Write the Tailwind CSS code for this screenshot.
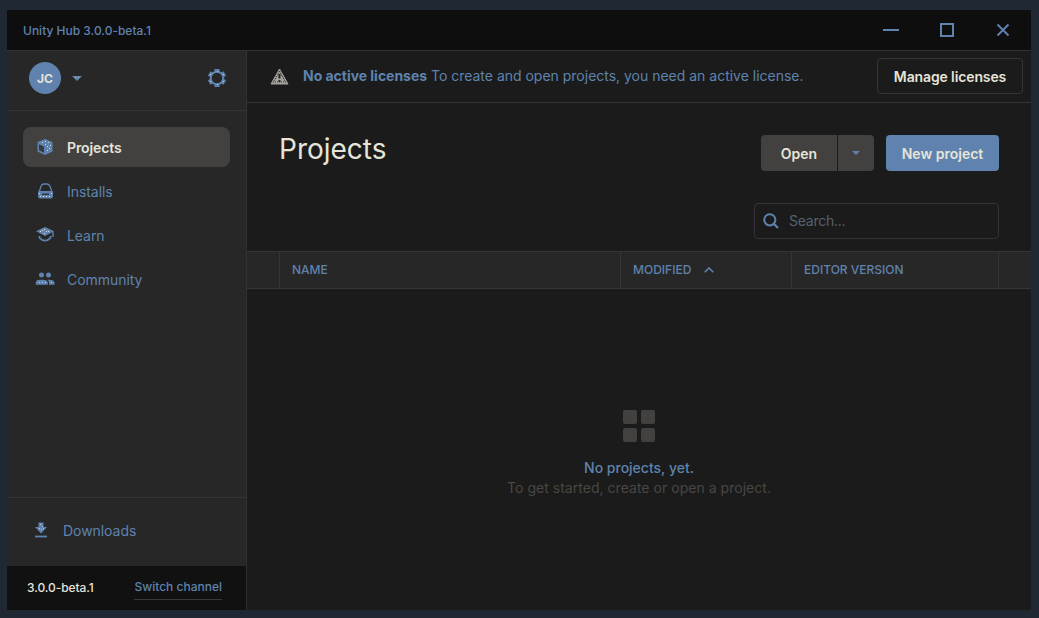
<!DOCTYPE html>
<html lang="en">
<head>
<meta charset="utf-8">
<title>Unity Hub</title>
<script src="https://cdn.jsdelivr.net/npm/@tailwindcss/browser@4"></script>
</head>
<body class="w-[1039px] h-[618px] overflow-hidden bg-[#202833] pt-[10px] pl-[7px] font-['Inter',sans-serif] text-[#5f83ae] text-sm">
<div class="w-[1024px] h-[600px] flex flex-col bg-[#1b1b1b]">
  <header class="h-10 shrink-0 bg-[#0e0e0e] flex items-center justify-between pl-4 pr-[21px]">
    <span class="text-[12px] font-medium pt-px">Unity Hub 3.0.0-beta.1</span>
    <div class="flex items-center">
      <svg class="w-4 h-4" viewBox="0 0 16 16"><path d="M0 8h16" stroke="currentColor" stroke-width="2"/></svg>
      <svg class="w-[14px] h-[14px] ml-[41px]" viewBox="0 0 14 14"><path d="M1 1h12v12H1z" fill="none" stroke="currentColor" stroke-width="2"/></svg>
      <svg class="w-[14px] h-[14px] ml-[42px]" viewBox="0 0 14 14"><path d="M1.500 1.500l11 11M12.500 1.500l-11 11" stroke="currentColor" stroke-width="1.900"/></svg>
    </div>
  </header>
  <div class="flex flex-1 min-h-0 border-t border-[#303134]">
    <aside class="w-60 shrink-0 bg-[#272727] border-r border-[#303136] flex flex-col">
      <div class="h-[60px] border-b border-[#343537] flex items-center pl-[22px] pr-5 pb-[5px]">
        <div class="w-8 h-8 rounded-full bg-[#5f83ae] text-[#e6e4d9] text-[12px] font-bold flex items-center justify-center pt-px">JC</div>
        <svg class="w-[10px] h-[5px] ml-[11px]" viewBox="0 0 10 5"><path d="M0 0h10L5 5z" fill="currentColor"/><path d="M3 1h1v1H3zM6 1h1v1H6z" fill="#a9b8c6"/></svg>
        <svg class="w-[18px] h-[18px] ml-auto" viewBox="0 0 18 18"><g fill="currentColor"><path d="M6.500 0h5v3.500h-5zM6.500 14.500h5V18h-5z"/><path d="M6.500 0h5v3.500h-5zM6.500 14.500h5V18h-5z" transform="rotate(60 9 9)"/><path d="M6.500 0h5v3.500h-5zM6.500 14.500h5V18h-5z" transform="rotate(120 9 9)"/></g><circle cx="9" cy="9" r="6.300" fill="none" stroke="currentColor" stroke-width="2"/><path d="M9 2h1v1H9zM9 15h1v1H9zM2 5h1v1H2zM15 5h1v1h-1zM2 12h1v1H2zM15 12h1v1h-1z" fill="#c3cad0"/></svg>
      </div>
      <nav class="px-4 pt-4 flex flex-col gap-1 tracking-[-0.05px]">
        <div class="h-10 rounded-lg bg-[#42413f] text-[#e6e4d9] font-semibold tracking-[-0.1px] flex items-center pl-3">
          <svg class="w-5 h-5 text-[#5f83ae]" viewBox="0 0 20 20"><path d="M10 2l7.500 3v9.500L10 18l-7.500-3.500V5z" fill="currentColor"/><path d="M4 7.200l5 2.300v6.200l-5-2.400z" fill="#383a3d"/><path d="M7 5h1v1H7zM10 4h1v1h-1zM10 7h1v1h-1zM13 5h1v1h-1zM12 9h1v1h-1zM15 8h1v1h-1zM12 13h1v1h-1zM14 11h1v1h-1z" fill="#dedccf"/></svg>
          <span class="ml-3 pt-px">Projects</span>
        </div>
        <div class="h-10 flex items-center pl-3">
          <svg class="w-5 h-5" viewBox="0 0 20 20"><path d="M4.300 10.500L6 5.300Q6.800 3 9 3h3Q14.200 3 15 5.300l1.700 5.200" fill="none" stroke="currentColor" stroke-width="1.300"/><path d="M3 11q0-1 1-1h13q1 0 1 1v4.500q0 2-2 2H5q-2 0-2-2z" fill="currentColor"/><path d="M7 12.500h7V14H7z" fill="#30343a"/><path d="M4 12h1v1H4zM16 12h1v1h-1zM5 15h1v1H5zM8 15h1v1H8zM11 15h1v1h-1zM14 15h1v1h-1z" fill="#dedccf"/></svg>
          <span class="ml-3 pt-px">Installs</span>
        </div>
        <div class="h-10 flex items-center pl-3">
          <svg class="w-5 h-5" viewBox="0 0 20 20"><path d="M1 6.300L10 2l9 4.300-9 4.700z" fill="currentColor"/><path d="M18 6.500V12" fill="none" stroke="currentColor" stroke-width="1.400"/><path d="M4.500 11v1.800Q10 18.500 15.500 12.800V11" fill="none" stroke="currentColor" stroke-width="1.700"/><path d="M7 5h1v1H7zM9 4h1v1H9zM11 6h1v1h-1zM9 8h1v1H9zM13 6h1v1h-1zM5 6h1v1H5z" fill="#dedccf"/></svg>
          <span class="ml-3 pt-px">Learn</span>
        </div>
        <div class="h-10 flex items-center pl-3">
          <svg class="w-5 h-5" viewBox="0 0 20 20"><g fill="currentColor"><circle cx="6.500" cy="6" r="2.500"/><circle cx="13.500" cy="6" r="2.500"/><path d="M.8 15.800v-2q0-3 4-3h3q5 0 5 3v2zM14 15.800v-2q0-2-1.500-3h1.200q5.800 0 5.800 3v2z"/></g><path d="M4 13h1v1H4zM7 13h1v1H7zM10 13h1v1h-1zM16 13h1v1h-1z" fill="#c3cad0"/></svg>
          <span class="ml-3 pt-px">Community</span>
        </div>
      </nav>
      <div class="mt-auto h-[69px] border-t border-[#343537] flex items-center pl-[27px]">
        <svg class="w-[14px] h-4 -mt-[4px]" viewBox="0 0 14 16"><path d="M4.500 .5h5V5H13L7 11.500 1 5h3.500z" fill="currentColor"/><path d="M1 14.500h12" stroke="currentColor" stroke-width="1.800"/><path d="M6 2h1v1H6zM8 4h1v1H8zM5 6h1v1H5zM7 7h1v1H7zM9 6h1v1H9z" fill="#c3cad0"/></svg>
        <span class="ml-[15px] -mt-0.5 tracking-[-0.05px]">Downloads</span>
      </div>
      <div class="h-11 bg-[#111] flex items-center justify-between pl-5 pr-6 text-[12px] font-medium">
        <span class="text-[#e6e4d9] tracking-[-0.08px]">3.0.0-beta.1</span>
        <span class="border-b border-[#39383c] leading-[26px] h-[25px] flex items-center -mt-px">Switch channel</span>
      </div>
    </aside>
    <main class="flex-1 min-w-0 flex flex-col">
      <div class="h-[52px] border-b border-[#343539] flex items-center pl-[23px] pr-2 pb-px">
        <svg class="w-[19px] h-[17px] text-[#a5a39b]" viewBox="0 0 19 17"><path d="M9.500 1L18 16H1z" fill="currentColor" stroke="currentColor" stroke-linejoin="round"/><path d="M9.500 6v4.500M9.500 12v2" stroke="#242424" stroke-width="2"/><path d="M9.500 3L3.500 14h12z" fill="none" stroke="#3a3937" stroke-width="1.200" stroke-dasharray="1 1"/></svg>
        <p class="ml-[14px] -mt-px whitespace-nowrap"><b class="font-bold tracking-[-0.03px]">No active licenses</b> <span class="tracking-[-0.01px]">To create and open projects, you need an active license.</span></p>
        <button class="ml-auto w-[146px] h-9 rounded border border-[#353538] text-[#e6e4d9] font-semibold tracking-[-0.12px] whitespace-nowrap pt-0.5">Manage licenses</button>
      </div>
      <div class="flex items-start justify-between pl-8 pr-8 pt-8">
        <h1 class="text-[28px] leading-[28px] text-[#e6e4d9] font-normal">Projects</h1>
        <div class="flex text-[#e6e4d9] font-semibold">
          <button class="w-[76px] h-9 rounded-l bg-[#42413f] pt-px">Open</button>
          <button class="w-9 h-9 ml-px rounded-r bg-[#42413f] flex items-center justify-center"><svg class="w-2 h-1 text-[#5f83ae]" viewBox="0 0 8 4"><path d="M0 0h8L4 4z" fill="currentColor"/></svg></button>
          <button class="w-[113px] h-9 ml-3 rounded bg-[#5f83ae] whitespace-nowrap pt-px">New project</button>
        </div>
      </div>
      <div class="mt-8 mr-8 self-end w-[245px] h-9 rounded border border-[#343438] flex items-center pl-2">
        <svg class="w-4 h-4" viewBox="0 0 16 16"><circle cx="6.800" cy="6.800" r="5.600" fill="none" stroke="currentColor" stroke-width="2"/><path d="M10.800 10.800l4.200 4.200" stroke="currentColor" stroke-width="2.200"/></svg>
        <span class="ml-[10px] tracking-[-0.25px] text-[#56616f]">Search...</span>
      </div>
      <div class="mt-3 h-[38px] shrink-0 bg-[#272727] border-y border-[#353639] flex text-[12px] font-medium [&>div]:border-r [&>div]:border-[#353539] [&>div]:flex [&>div]:items-center">
        <div class="w-[33px]"></div>
        <div class="w-[341px] pl-3">NAME</div>
        <div class="w-[171px] pl-3">MODIFIED<svg class="w-[10px] h-[6px] ml-[13px]" viewBox="0 0 10 6"><path d="M.7 5.300L5 1l4.300 4.300" fill="none" stroke="currentColor" stroke-width="1.600"/></svg></div>
        <div class="w-[207px] pl-3">EDITOR VERSION</div>
      </div>
      <div class="flex-1 flex flex-col items-center pt-[121px] leading-5">
        <div class="grid grid-cols-2 gap-1 w-8 h-8 [&>i]:bg-[#42413f] [&>i]:rounded-[2px]"><i></i><i></i><i></i><i></i></div>
        <p class="mt-4 font-medium">No projects, yet.</p>
        <p class="text-[#484744] tracking-[0.03px]">To get started, create or open a project.</p>
      </div>
    </main>
  </div>
</div>
</body>
</html>
